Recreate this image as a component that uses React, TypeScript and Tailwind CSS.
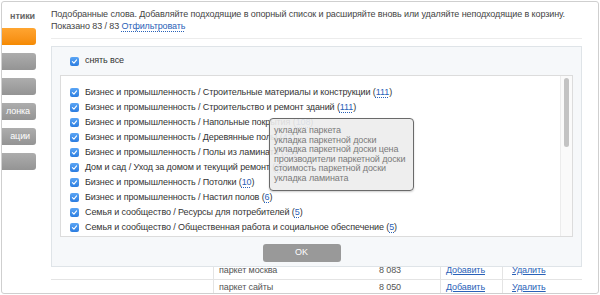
import React from 'react';

const items: { label: string; count: string }[] = [
    { label: 'Бизнес и промышленность / Строительные материалы и конструкции', count: '111' },
    { label: 'Бизнес и промышленность / Строительство и ремонт зданий', count: '111' },
    { label: 'Бизнес и промышленность / Напольные покрытия', count: '108' },
    { label: 'Бизнес и промышленность / Деревянные полы', count: '47' },
    { label: 'Бизнес и промышленность / Полы из ламината', count: '35' },
    { label: 'Дом и сад / Уход за домом и текущий ремонт', count: '22' },
    { label: 'Бизнес и промышленность / Потолки', count: '10' },
    { label: 'Бизнес и промышленность / Настил полов', count: '6' },
    { label: 'Семья и сообщество / Ресурсы для потребителей', count: '5' },
    { label: 'Семья и сообщество / Общественная работа и социальное обеспечение', count: '5' },
];

const hints = [
    'укладка паркета',
    'укладка паркетной доски',
    'укладка паркетной доски цена',
    'производители паркетной доски',
    'стоимость паркетной доски',
    'укладка ламината',
];

function Check() {
    return (
        <span className="flex h-[9px] w-[9px] shrink-0 items-center justify-center rounded-[2px] bg-gradient-to-b from-[#5aa5f5] to-[#2b7de0]">
            <svg viewBox="0 0 10 10" className="h-[7px] w-[7px]">
                <path d="M2 5.2 L4.2 7.3 L8 2.8" fill="none" stroke="#fff" strokeWidth="1.6" strokeLinecap="round" strokeLinejoin="round" />
            </svg>
        </span>
    );
}

function SideButton({ orange, label }: { orange?: boolean; label?: string }) {
    return (
        <div
            className={
                orange
                    ? 'flex h-[17px] items-center justify-end rounded-r-[3px] bg-gradient-to-b from-[#ffa530] to-[#f58a00] pr-[6px] text-white'
                    : 'flex h-[17px] items-center justify-end rounded-r-[3px] bg-gradient-to-b from-[#adadad] to-[#949494] pr-[6px] text-white'
            }
        >
            {label}
        </div>
    );
}

export default function App() {
    return (
        <div className="h-[295px] w-[600px] overflow-hidden bg-white p-px font-['Liberation_Sans',Arial,sans-serif] text-[9px] tracking-[-0.1px] text-[#333]">
            <div className="flex h-[293px] overflow-hidden rounded-[3px] border border-[#cfcfcf]">
                {/* Sidebar */}
                <div className="w-[34px] shrink-0 pt-[8px]">
                    <div className="pr-px text-right font-bold leading-[12px] text-[#666]">нтики</div>
                    <div className="mt-[6px] flex flex-col gap-[8px]">
                        <SideButton orange />
                        <SideButton />
                        <SideButton />
                        <SideButton label="лонка" />
                        <SideButton label="ации" />
                        <SideButton />
                    </div>
                </div>

                {/* Main */}
                <div className="ml-[15px] flex w-[531px] shrink-0 flex-col">
                    <div className="shrink-0 pt-[7px] leading-[11.5px] text-[#444]">
                        <div>Подобранные слова. Добавляйте подходящие в опорный список и расширяйте вновь или удаляйте неподходящие в корзину.</div>
                        <div>
                            Показано 83 / 83{' '}
                            <span className="text-[#2a62b8] underline decoration-dotted underline-offset-2">Отфильтровать</span>
                        </div>
                    </div>
                    <div className="mt-[6px] h-px w-[531px] shrink-0 bg-[#ececec]" />

                    {/* Modal */}
                    <div className="relative z-10 mt-[7px] h-[221px] w-[531px] shrink-0 border border-[#dfe4e8] bg-[#f6f8fa]">
                        <div className="flex h-[28px] items-center gap-[6px] pl-[18px]">
                            <Check />
                            <span>снять все</span>
                        </div>
                        <div className="relative mx-[8px] flex h-[162px] border border-[#dcdcdc] bg-white">
                            <div className="flex flex-1 flex-col pl-[9px] pt-[9px]">
                                {items.map((it) => (
                                    <div key={it.label} className="flex h-[15px] items-center gap-[6px] whitespace-nowrap">
                                        <Check />
                                        <span>
                                            {it.label} (<span className="text-[#2a62b8] underline decoration-dotted underline-offset-2">{it.count}</span>)
                                        </span>
                                    </div>
                                ))}
                            </div>
                            <div className="w-[12px] border-l border-[#ececec] bg-[#fafafa] px-[3px] pt-[2px]">
                                <div className="h-[69px] rounded-full bg-[#c3c3c3]" />
                            </div>

                            {/* Tooltip */}
                            <div className="absolute left-[208px] top-[42px] w-[145px] rounded-[4px] border border-[#6a6a6a] bg-[#ececec]/90 px-[4px] pb-[6px] pt-[7px] leading-[9.6px] text-[#7a7a7a] shadow-[0_1px_2px_rgba(0,0,0,0.2)]">
                                {hints.map((h) => (
                                    <div key={h} className="whitespace-nowrap">{h}</div>
                                ))}
                            </div>
                        </div>
                        <div className="flex justify-center pt-[7px]">
                            <div className="ml-[-30px] flex h-[18px] w-[78px] items-center justify-center rounded-[3px] bg-[#999] text-white">
                                OK
                            </div>
                        </div>
                    </div>

                    {/* Table under modal */}
                    <div className="mt-[-4px] shrink-0 text-[#555]">
                        {['паркет москва', 'паркет сайты'].map((k, i) => (
                            <div key={k} className="flex h-[17px] w-[531px] border-b border-[#e4e4e4]">
                                <div className="w-[163px] border-r border-[#e4e4e4]" />
                                <div className="flex w-[160px] items-center pl-[5px]">{k}</div>
                                <div className="flex w-[67px] items-center border-r border-[#e4e4e4] pl-[5px]">{i === 0 ? '8 083' : '8 050'}</div>
                                <div className="flex w-[62px] items-center border-r border-[#e4e4e4] pl-[5px]">
                                    <span className="text-[#2a62b8] underline">Добавить</span>
                                </div>
                                <div className="flex flex-1 items-center pl-[9px]">
                                    <span className="text-[#2a62b8] underline">Удалить</span>
                                </div>
                            </div>
                        ))}
                    </div>
                </div>
            </div>
        </div>
    );
}
